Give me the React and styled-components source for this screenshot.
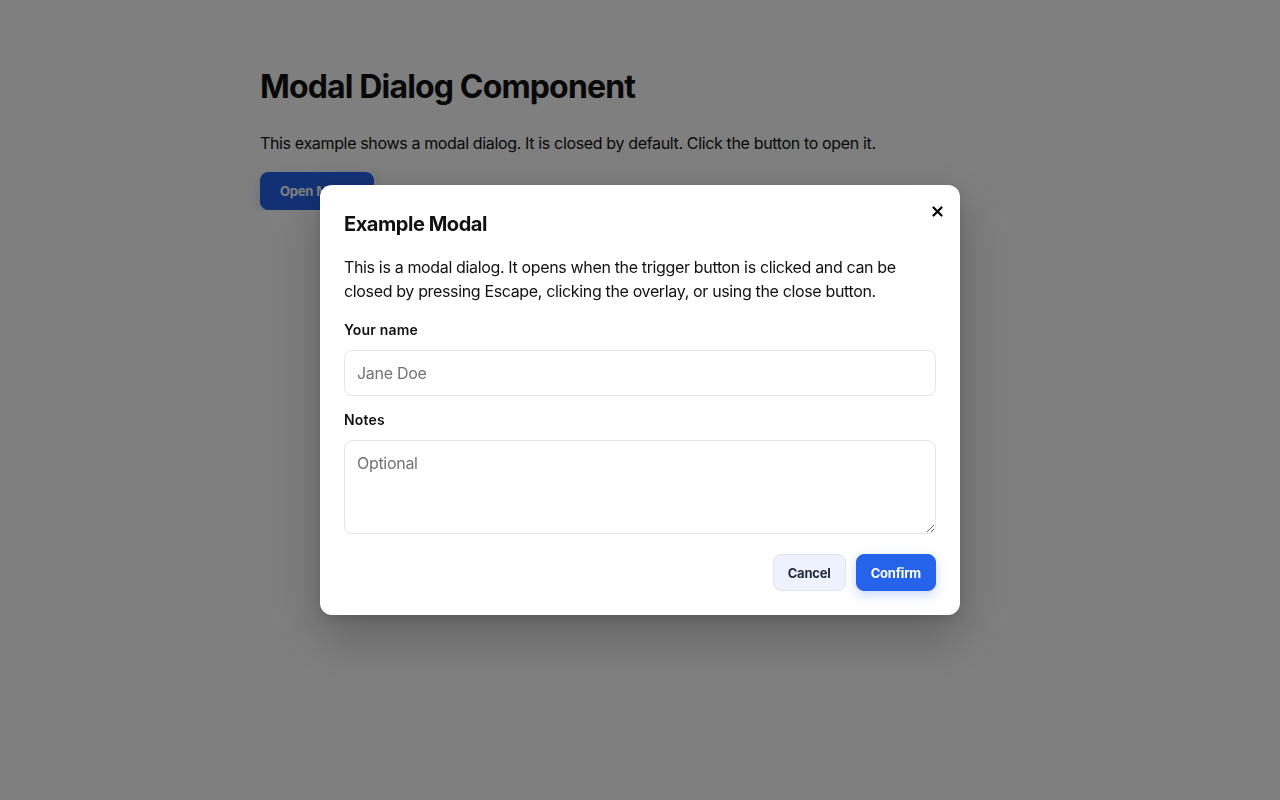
import React from "react";
import styled, { createGlobalStyle } from "styled-components";

const GlobalStyle = createGlobalStyle`
  * { box-sizing: border-box; }
  html, body { margin: 0; padding: 0; background: #ffffff; }
  body {
    font-family: Inter, "Noto Sans", "Liberation Sans", sans-serif;
    color: #111111;
    -webkit-font-smoothing: antialiased;
  }
`;

const Page = styled.main`
  max-width: 760px;
  margin: 0 auto;
  padding-top: 68px;
`;

const Title = styled.h1`
  margin: 0;
  font-size: 32px;
  line-height: 38px;
  font-weight: 700;
  letter-spacing: -0.85px;
  color: #111111;
`;

const Lead = styled.p`
  margin: 25px 0 17px;
  font-size: 16px;
  line-height: 24px;
  letter-spacing: -0.35px;
  color: #111111;
`;

const Button = styled.button`
  font-family: inherit;
  font-size: 13px;
  font-weight: 700;
  line-height: 18px;
  letter-spacing: -0.2px;
  height: ${(p) => p.$h || 37}px;
  padding: 0 ${(p) => p.$px || 14}px;
  border-radius: 8px;
  cursor: pointer;
  border: 1px solid ${(p) => (p.$variant === "ghost" ? "#dfe3f0" : "#2563eb")};
  background: ${(p) => (p.$variant === "ghost" ? "#eef2ff" : "#2563eb")};
  color: ${(p) => (p.$variant === "ghost" ? "#1f2937" : "#ffffff")};
  box-shadow: ${(p) =>
    p.$variant === "ghost" ? "none" : "0 4px 12px rgba(37, 99, 235, 0.25)"};
`;

const Overlay = styled.div`
  position: fixed;
  inset: 0;
  background: rgba(0, 0, 0, 0.5);
  display: flex;
  align-items: center;
  justify-content: center;
`;

const Dialog = styled.div`
  position: relative;
  width: 640px;
  background: #ffffff;
  border-radius: 12px;
  padding: 24px;
  box-shadow: 0 20px 50px rgba(0, 0, 0, 0.25), 0 4px 12px rgba(0, 0, 0, 0.12);
`;

const CloseButton = styled.button`
  position: absolute;
  top: 12px;
  right: 9px;
  width: 28px;
  height: 28px;
  display: flex;
  align-items: center;
  justify-content: center;
  border: none;
  background: transparent;
  padding: 0;
  cursor: pointer;
  color: #000000;
`;

const DialogTitle = styled.h2`
  margin: 0;
  font-size: 20px;
  line-height: 30px;
  font-weight: 700;
  color: #111111;
  letter-spacing: -0.45px;
`;

const DialogText = styled.p`
  margin: 16px 0;
  font-size: 16px;
  line-height: 24px;
  letter-spacing: -0.35px;
  color: #111111;
`;

const Field = styled.div`
  display: flex;
  flex-direction: column;
  & + & {
    margin-top: 13px;
  }
`;

const Label = styled.label`
  font-size: 14px;
  line-height: 21px;
  font-weight: 600;
  letter-spacing: 0.2px;
  color: #111111;
  margin-bottom: 10px;
`;

const inputBase = `
  width: 100%;
  font-family: inherit;
  font-size: 16px;
  line-height: 22px;
  letter-spacing: -0.3px;
  color: #111111;
  border: 1px solid #e3e5e8;
  border-radius: 8px;
  padding: 11px 12px;
  background: #ffffff;
  outline: none;
  &::placeholder { color: #737373; }
`;

const TextInput = styled.input`
  ${inputBase}
  height: 46px;
`;

const TextArea = styled.textarea`
  ${inputBase}
  height: 94px;
  resize: vertical;
  display: block;
`;

const Actions = styled.div`
  display: flex;
  justify-content: flex-end;
  gap: 10px;
  margin-top: 20px;
`;

function CloseIcon() {
  return (
    <svg width="11" height="11" viewBox="0 0 11 11" aria-hidden="true">
      <path
        d="M1.5 1.5 L9.5 9.5 M9.5 1.5 L1.5 9.5"
        stroke="currentColor"
        strokeWidth="2.2"
        strokeLinecap="round"
      />
    </svg>
  );
}

export default function App() {
  return (
    <>
      <GlobalStyle />
      <Page>
        <Title>Modal Dialog Component</Title>
        <Lead>
          This example shows a modal dialog. It is closed by default. Click the
          button to open it.
        </Lead>
        <Button $h={38} $px={19}>Open Modal</Button>
      </Page>
      <Overlay>
        <Dialog role="dialog" aria-modal="true" aria-labelledby="modal-title">
          <CloseButton aria-label="Close">
            <CloseIcon />
          </CloseButton>
          <DialogTitle id="modal-title">Example Modal</DialogTitle>
          <DialogText>
            This is a modal dialog. It opens when the trigger button is clicked
            and can be closed by pressing Escape, clicking the overlay, or using
            the close button.
          </DialogText>
          <Field>
            <Label htmlFor="name">Your name</Label>
            <TextInput id="name" placeholder="Jane Doe" />
          </Field>
          <Field>
            <Label htmlFor="notes">Notes</Label>
            <TextArea id="notes" placeholder="Optional" />
          </Field>
          <Actions>
            <Button $variant="ghost">Cancel</Button>
            <Button>Confirm</Button>
          </Actions>
        </Dialog>
      </Overlay>
    </>
  );
}
